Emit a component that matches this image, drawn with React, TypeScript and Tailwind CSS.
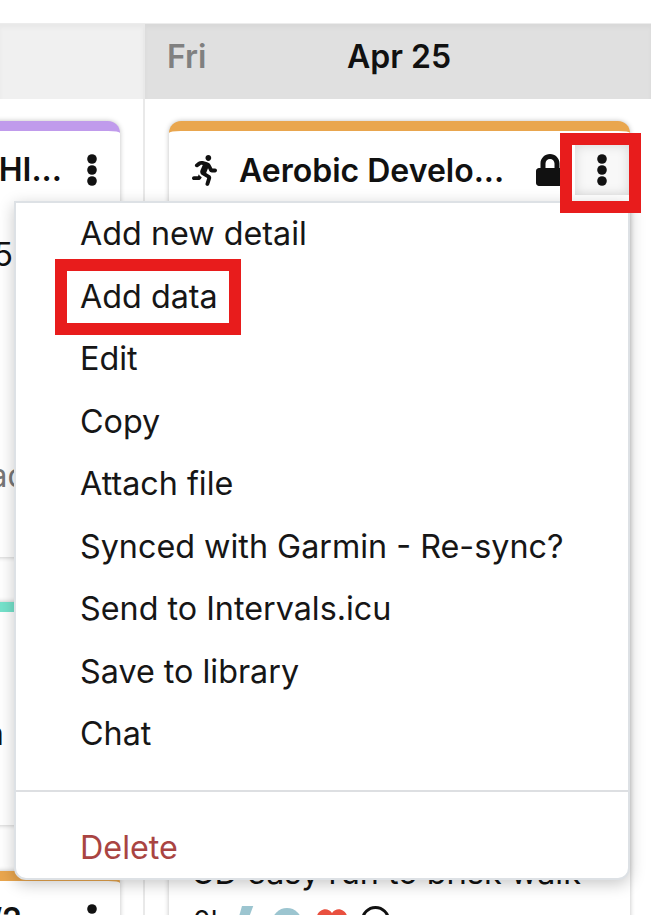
import React from 'react';
import { FaLock, FaRunning } from 'react-icons/fa';

const menuItems = [
  'Add new detail',
  'Add data',
  'Edit',
  'Copy',
  'Attach file',
  'Synced with Garmin - Re-sync?',
  'Send to Intervals.icu',
  'Save to library',
  'Chat',
];

const Dots = ({ className }: { className?: string }) => (
  <svg viewBox="0 0 10 32" className={className} fill="#111111">
    <circle cx="5" cy="5" r="4.8" />
    <circle cx="5" cy="16" r="4.8" />
    <circle cx="5" cy="27" r="4.8" />
  </svg>
);

const LeftColumn = () => (
  <div className="flex h-full w-[145px] shrink-0 flex-col overflow-hidden border-r-2 border-[#e9e9e9]">
    <div className="h-[75px] shrink-0 bg-[#f0f0f0] shadow-[inset_0_4px_4px_rgba(0,0,0,0.03)]" />
    <div className="flex flex-col items-end pr-[23px] pt-[22px]">
      <div className="h-[436px] w-[200px] shrink-0 overflow-hidden rounded-t-xl border-t-[10px] border-[#c09bec] bg-white shadow-[0_0_5px_rgba(0,0,0,0.25)]">
        <div className="flex h-[78px] items-center justify-end gap-[25px] pr-[23px] text-[32px] font-semibold text-[#111111]">
          <span>HI...</span>
          <Dots className="h-[32px] w-[10px]" />
        </div>
        <div className="mt-[28px] pr-[107px] text-right text-[32px] leading-[36px] text-[#111111]">5</div>
        <div className="mt-[185px] pr-[93px] text-right text-[32px] leading-[36px] text-[#777777]">ad</div>
      </div>
      <div className="mt-[45px] h-[223px] w-[200px] shrink-0 overflow-hidden rounded-t-xl border-t-[10px] border-[#75e2cb] bg-white shadow-[0_0_5px_rgba(0,0,0,0.25)]">
        <div className="pr-[116px] pt-[104px] text-right text-[32px] leading-[36px] text-[#111111]">n</div>
      </div>
      <div className="mt-[46px] h-[60px] w-[200px] shrink-0 overflow-hidden rounded-t-xl border-t-[10px] border-[#e9a64e] bg-white shadow-[0_0_5px_rgba(0,0,0,0.25)]">
        <div className="flex h-[78px] items-center justify-end gap-[65px] pr-[23px] text-[32px] font-semibold text-[#111111]">
          <span>/2</span>
          <Dots className="h-[32px] w-[10px]" />
        </div>
      </div>
    </div>
  </div>
);

const RightColumn = () => (
  <div className="flex h-full min-w-0 flex-1 flex-col overflow-hidden">
    <div className="flex h-[75px] shrink-0 items-center bg-[#e0e0e0] pb-[10px] pl-[22px] text-[32px] font-semibold text-[#111111] shadow-[inset_0_4px_4px_rgba(0,0,0,0.03)]">
      <span className="w-[180px] text-[#808080]">Fri</span>
      <span>Apr 25</span>
    </div>
    <div className="pl-[24px] pr-[21px] pt-[22px]">
      <div className="h-[820px] overflow-hidden rounded-t-xl border-t-[10px] border-[#e9a64e] bg-white shadow-[0_0_5px_rgba(0,0,0,0.25)]">
        <div className="flex h-[78px] items-center pl-[23px] pr-[1px]">
          <FaRunning className="h-[31px] w-[25px] shrink-0 text-[#111111]" />
          <span className="ml-[22px] pt-[2px] text-[32px] font-semibold text-[#111111]">Aerobic Develo...</span>
          <FaLock className="ml-auto h-[32px] w-[28px] shrink-0 text-[#111111]" />
          <div className="ml-[11px] mt-[14px] flex h-[50px] w-[54px] shrink-0 items-center justify-center self-start bg-[#f8f8f8] shadow-[inset_0_0_12px_rgba(0,0,0,0.14)]">
            <Dots className="h-[32px] w-[10px]" />
          </div>
        </div>
        <div className="mt-[644px] pl-[22px] text-[32.3px] leading-[40px] text-[#111111]">CD easy run to brisk walk</div>
        <div className="mt-[13px] flex items-start pl-[24px]">
          <span className="w-[45px] text-[28px] leading-[30px] text-[#111111]">0h</span>
          <svg viewBox="0 0 16 30" className="h-[30px] w-[16px]">
            <path d="M4 0 16 -2 10 14 H0z" fill="#9cc5d0" />
          </svg>
          <div className="ml-[18px] mt-[2px] h-[30px] w-[30px] rounded-full bg-[#9cc5d0]" />
          <svg viewBox="0 0 32 30" className="ml-[14px] mt-[2px] h-[30px] w-[32px]">
            <path d="M16 28 2 13C-3 5 10-4 16 5c6-9 19 0 14 8z" fill="#e9503f" />
          </svg>
          <div className="ml-[13px] h-[30px] w-[29px] rounded-full border-[3px] border-[#111111]" />
        </div>
      </div>
    </div>
  </div>
);

const App: React.FC = () => {
  return (
    <div className="relative h-[915px] w-[651px] overflow-hidden bg-white font-['Inter',sans-serif]">
      <div className="h-[24px] border-b border-[#ececec]" />
      <div className="flex h-[891px]">
        <LeftColumn />
        <RightColumn />
      </div>

      {/* options menu */}
      <div className="absolute left-[14px] top-[201px] h-[679px] w-[616px] rounded-b-xl border-2 border-[#dde1e5] bg-white pl-[64px] shadow-[0_4px_16px_rgba(0,0,0,0.22)]">
        {menuItems.map(item => (
          <div key={item} className="h-[62.5px] text-[32.3px] leading-[61px] text-[#161616]">
            {item}
          </div>
        ))}
        <div className="absolute left-0 right-0 top-[587px] h-[2px] bg-[#dddfe2]" />
        <div className="absolute left-[64px] top-[614px] text-[32.3px] leading-[62px] text-[#a94442]">Delete</div>
      </div>

      {/* red annotations */}
      <div className="absolute left-[55px] top-[259px] h-[76px] w-[186px] border-[12px] border-[#e81c1c]" />
      <div className="absolute left-[560px] top-[133px] h-[80px] w-[81px] border-[12px] border-[#e81c1c]" />
    </div>
  );
};

export default App;
